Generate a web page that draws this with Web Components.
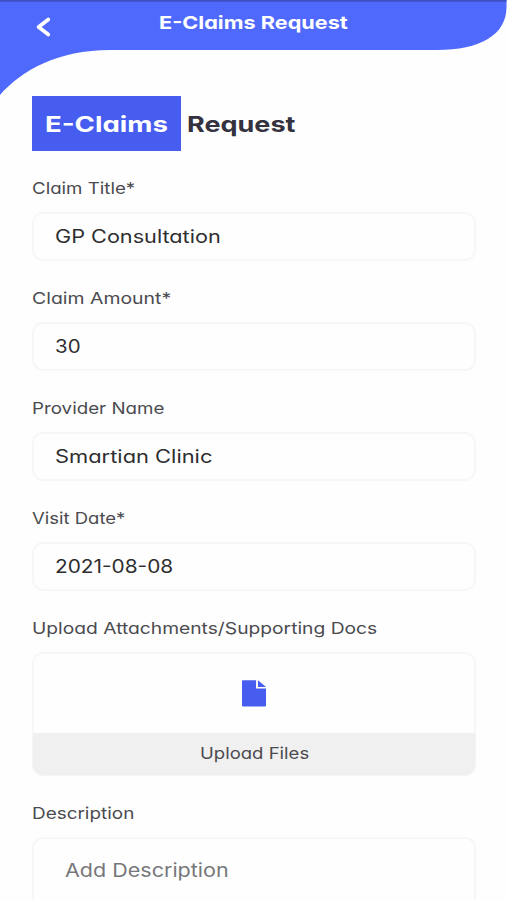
<!DOCTYPE html>
<html lang="en">
<head>
<meta charset="UTF-8">
<meta name="viewport" content="width=device-width, initial-scale=1.0">
<title>E-Claims Request</title>
<style>
  body {
    margin: 0;
    height: 900px;
    overflow: hidden;
    background: #fefefe;
    font-family: Inter, "Open Sans", sans-serif;
    font-feature-settings: "cv11";
    color: #4b4b50;
  }
</style>
</head>
<body>
  <claims-header>
    <fit-text width="189" size="18" weight="700">E-Claims Request</fit-text>
  </claims-header>

  <claims-form>
    <claims-heading slot="heading">
      <fit-text slot="mark" width="123" size="21.5" weight="700">E-Claims</fit-text>
      <fit-text width="108" size="21.5" weight="700">Request</fit-text>
    </claims-heading>

    <claims-field>
      <fit-text slot="label" width="103">Claim Title*</fit-text>
      <fit-text width="166" size="18">GP Consultation</fit-text>
    </claims-field>
    <claims-field>
      <fit-text slot="label" width="139">Claim Amount*</fit-text>
      <fit-text width="25" size="18">30</fit-text>
    </claims-field>
    <claims-field>
      <fit-text slot="label" width="133">Provider Name</fit-text>
      <fit-text width="158" size="18">Smartian Clinic</fit-text>
    </claims-field>
    <claims-field>
      <fit-text slot="label" width="93">Visit Date*</fit-text>
      <fit-text width="118" size="18">2021-08-08</fit-text>
    </claims-field>
    <claims-upload>
      <fit-text slot="label" width="345">Upload Attachments/Supporting Docs</fit-text>
      <fit-text width="109">Upload Files</fit-text>
    </claims-upload>
    <claims-field multiline>
      <fit-text slot="label" width="102">Description</fit-text>
      <fit-text width="164" size="18.5">Add Description</fit-text>
    </claims-field>
  </claims-form>

<script>
  // One line of text, stretched sideways to the given width
  class FitText extends HTMLElement {
    constructor() {
      super();
      const shadowRoot = this.attachShadow({ mode: 'open' });
      shadowRoot.innerHTML = `
        <style>
          :host {
            display: block;
            flex: none;
            height: 24px;
            line-height: 24px;
            white-space: nowrap;
          }

          span {
            display: inline-block;
            transform-origin: left center;
          }
        </style>
        <span><slot></slot></span>
      `;
    }

    connectedCallback() {
      const text = this.shadowRoot.querySelector('span');
      const width = Number(this.getAttribute('width'));
      this.style.fontSize = (this.getAttribute('size') || 16.5) + 'px';
      this.style.fontWeight = this.getAttribute('weight') || 400;
      this.style.width = width + 'px';
      text.style.transform = `scaleX(${width / text.offsetWidth})`;
    }
  }

  class ClaimsHeader extends HTMLElement {
    constructor() {
      super();
      const shadowRoot = this.attachShadow({ mode: 'open' });
      shadowRoot.innerHTML = `
        <style>
          :host {
            display: grid;
            flex: none;
            height: 96px;
            color: #fff;
          }

          .shape, .bar {
            grid-area: 1 / 1;
          }

          .bar {
            display: grid;
            grid-template-columns: 1fr auto 1fr;
            align-items: center;
            height: 45px;
          }

          .back {
            margin: 8px 0 0 35px;
            width: 17px;
            height: 22px;
          }
        </style>
        <svg class="shape" width="507" height="96" viewBox="0 0 507 96">
          <path fill="#5069fd" d="M0 0H506.500V7C506.500 35 480 50 437 50H110C58 50 22 70 0 95Z"/>
          <path fill="#3f4fc4" d="M0 0H506.500V1.700H0Z"/>
        </svg>
        <div class="bar">
          <svg class="back" viewBox="0 0 17 22" fill="none" stroke="#fff" stroke-width="3.700" stroke-linecap="round" stroke-linejoin="round">
            <path d="M13.300 3.500L3.600 11L13.300 18.500"/>
          </svg>
          <slot></slot>
        </div>
      `;
    }
  }

  class ClaimsForm extends HTMLElement {
    constructor() {
      super();
      const shadowRoot = this.attachShadow({ mode: 'open' });
      shadowRoot.innerHTML = `
        <style>
          :host {
            display: flex;
            flex-direction: column;
            gap: 25px;
            padding: 0 31px 0 32px;
          }
        </style>
        <slot name="heading"></slot>
        <slot></slot>
      `;
    }
  }

  class ClaimsHeading extends HTMLElement {
    constructor() {
      super();
      const shadowRoot = this.attachShadow({ mode: 'open' });
      shadowRoot.innerHTML = `
        <style>
          :host {
            display: flex;
            align-items: center;
            gap: 6px;
            height: 55px;
            color: #34323f;
          }

          .mark {
            display: flex;
            align-items: center;
            box-sizing: border-box;
            width: 149px;
            height: 55px;
            padding-left: 12.500px;
            background: #465df0;
            color: #fff;
          }
        </style>
        <div class="mark"><slot name="mark"></slot></div>
        <slot></slot>
      `;
    }
  }

  class ClaimsField extends HTMLElement {
    constructor() {
      super();
      const shadowRoot = this.attachShadow({ mode: 'open' });
      shadowRoot.innerHTML = `
        <style>
          :host {
            display: flex;
            flex-direction: column;
            gap: 12px;
          }

          .box {
            display: flex;
            align-items: center;
            box-sizing: border-box;
            height: 49px;
            padding-left: 21px;
            border: 2px solid #f7f7f7;
            border-radius: 11px;
            color: #2e2e30;
          }

          /* the description box runs on to the bottom of the screen */
          :host([multiline]) .box {
            align-items: flex-start;
            height: 63px;
            padding: 19px 0 0 31px;
            border-bottom: 0;
            border-radius: 11px 11px 0 0;
            color: #77777a;
          }
        </style>
        <slot name="label"></slot>
        <div class="box"><slot></slot></div>
      `;
    }
  }

  class ClaimsUpload extends HTMLElement {
    constructor() {
      super();
      const shadowRoot = this.attachShadow({ mode: 'open' });
      shadowRoot.innerHTML = `
        <style>
          :host {
            display: flex;
            flex-direction: column;
            gap: 12px;
          }

          .box {
            display: flex;
            flex-direction: column;
            height: 124px;
          }

          .icon {
            display: flex;
            flex: 1;
            align-items: center;
            justify-content: center;
            border: 2px solid #f7f7f7;
            border-bottom: 0;
            border-radius: 11px 11px 0 0;
          }

          .action {
            display: flex;
            align-items: center;
            justify-content: center;
            box-sizing: border-box;
            height: 43px;
            border: 1px solid #f5f5f5;
            border-top: 0;
            border-radius: 0 0 11px 11px;
            padding-bottom: 2px;
            background: #f0f0f0;
          }
        </style>
        <slot name="label"></slot>
        <div class="box">
          <div class="icon">
            <svg width="24" height="27" viewBox="0 0 24 27" fill="#465df0">
              <path d="M1 0.300H14V8.500H24V25.600Q24 26.600 23 26.600H1Q0 26.600 0 25.600V1.300Q0 0.300 1 0.300Z"/>
              <path d="M16 0.300L24 7H16Z"/>
            </svg>
          </div>
          <div class="action"><slot></slot></div>
        </div>
      `;
    }
  }

  customElements.define('claims-header', ClaimsHeader);
  customElements.define('claims-form', ClaimsForm);
  customElements.define('claims-heading', ClaimsHeading);
  customElements.define('claims-field', ClaimsField);
  customElements.define('claims-upload', ClaimsUpload);
  customElements.define('fit-text', FitText);
</script>
</body>
</html>
